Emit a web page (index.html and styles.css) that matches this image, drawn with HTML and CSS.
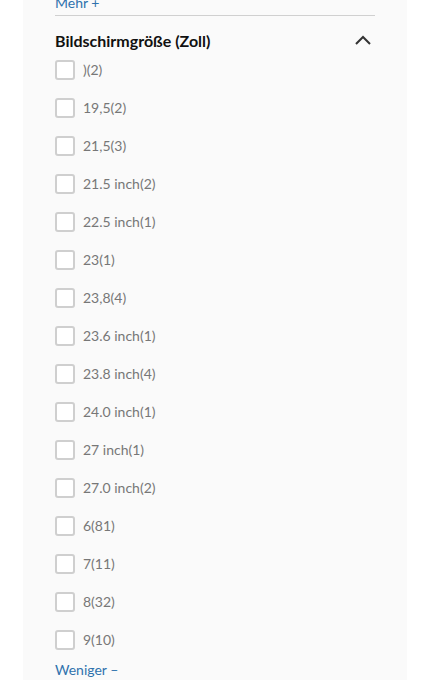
FILE: index.html
```html
<!DOCTYPE html>
<html lang="de">
<head>
<meta charset="utf-8">
<link rel="stylesheet" href="styles.css">
</head>
<body>
<div class="panel">
  <div class="more-wrap"><a class="link" href="#">Mehr +</a></div>
  <div class="heading">
    <span>Bildschirmgröße (Zoll)</span>
    <svg class="chev" width="18" height="12" viewBox="0 0 18 12"><path d="M2 10 L9 3 L16 10" fill="none" stroke="#333" stroke-width="2"/></svg>
  </div>
  <ul class="list">
    <li><span class="box"></span><span class="label">)(2)</span></li>
    <li><span class="box"></span><span class="label">19,5(2)</span></li>
    <li><span class="box"></span><span class="label">21,5(3)</span></li>
    <li><span class="box"></span><span class="label">21.5 inch(2)</span></li>
    <li><span class="box"></span><span class="label">22.5 inch(1)</span></li>
    <li><span class="box"></span><span class="label">23(1)</span></li>
    <li><span class="box"></span><span class="label">23,8(4)</span></li>
    <li><span class="box"></span><span class="label">23.6 inch(1)</span></li>
    <li><span class="box"></span><span class="label">23.8 inch(4)</span></li>
    <li><span class="box"></span><span class="label">24.0 inch(1)</span></li>
    <li><span class="box"></span><span class="label">27 inch(1)</span></li>
    <li><span class="box"></span><span class="label">27.0 inch(2)</span></li>
    <li><span class="box"></span><span class="label">6(81)</span></li>
    <li><span class="box"></span><span class="label">7(11)</span></li>
    <li><span class="box"></span><span class="label">8(32)</span></li>
    <li><span class="box"></span><span class="label">9(10)</span></li>
  </ul>
  <div class="less-wrap"><a class="link" href="#">Weniger –</a></div>
</div>
</body>
</html>
```
FILE: styles.css
```css
html, body {
  margin: 0;
  padding: 0;
  background: #ffffff;
  font-family: Lato, "Liberation Sans", sans-serif;
}
.panel {
  margin-left: 23px;
  width: 384px;
  box-sizing: border-box;
  padding: 0 32px 20px;
  background: #fafafa;
  margin-top: -5px;
}
.more-wrap {
  font-size: 14px;
  line-height: 16px;
  padding-bottom: 4px;
  border-bottom: 1px solid #d0d0d0;
}
.link {
  color: #2f72ad;
  text-decoration: none;
}
.heading {
  margin-top: 15px;
  font-size: 16px;
  line-height: 19px;
  font-weight: 700;
  color: #111;
  display: flex;
  justify-content: space-between;
  align-items: center;
}
.chev {
  margin-right: 3px;
  margin-top: -1px;
}
.list {
  list-style: none;
  margin: 1px 0 0;
  padding: 0;
}
.list li {
  height: 38px;
  display: flex;
  align-items: center;
  gap: 8px;
  font-size: 14px;
  color: #777777;
}
.label {
  padding-bottom: 2px;
}
.box {
  width: 20px;
  height: 20px;
  box-sizing: border-box;
  border: 2px solid #cfcfcf;
  border-radius: 3px;
  background: #fff;
}
.less-wrap {
  margin-top: 3px;
  font-size: 14px;
  line-height: 16px;
}
```
